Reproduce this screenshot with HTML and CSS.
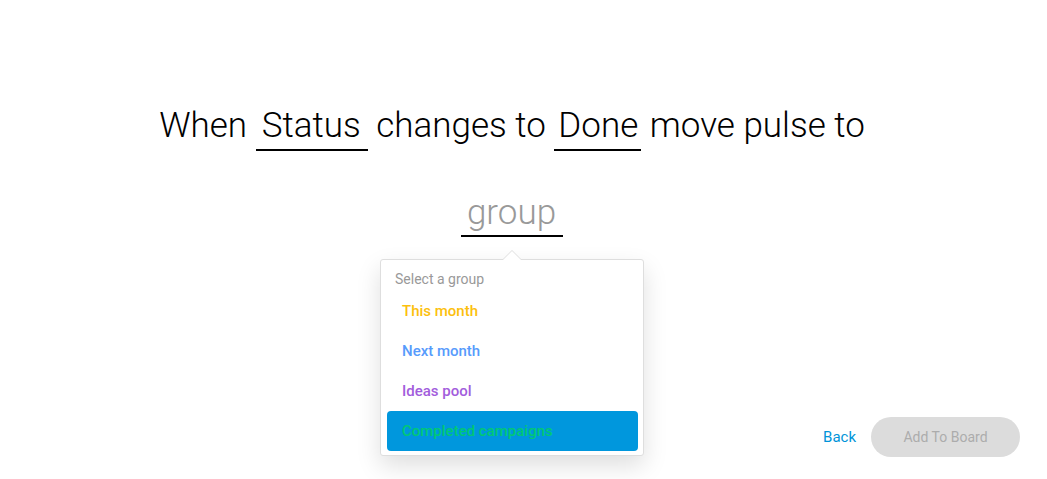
FILE: index.html
```html
<!DOCTYPE html>
<html>
<head>
<meta charset="utf-8">
<link rel="stylesheet" href="styles.css">
</head>
<body>
<div class="page">
  <div class="sentence">
    <div class="line">When <span class="word word-status">Status</span> changes to <span class="word word-done">Done</span> move pulse to</div>
    <div class="line line-group">
      <span class="word word-group">group
        <div class="dropdown">
          <div class="dd-title">Select a group</div>
          <div class="dd-item c-yellow">This month</div>
          <div class="dd-item c-blue">Next month</div>
          <div class="dd-item c-purple">Ideas pool</div>
          <div class="dd-item c-green selected">Completed campaigns</div>
        </div>
      </span>
    </div>
  </div>
  <div class="footer">
    <a class="back">Back</a>
    <button class="add">Add To Board</button>
  </div>
</div>
</body>
</html>
```
FILE: styles.css
```css
html, body {
  margin: 0;
  padding: 0;
  background: #fff;
}
body {
  font-family: Roboto, "Noto Sans", sans-serif;
}
.page {
  height: 479px;
  display: flex;
  flex-direction: column;
  box-sizing: border-box;
}
.sentence {
  padding-top: 104px;
  padding-right: 23px;
  text-align: center;
  font-size: 35px;
  font-weight: 300;
  color: #000;
}
.line {
  line-height: 43px;
  white-space: nowrap;
}
.line-group {
  margin-top: 40px;
}
.word {
  display: inline-block;
  padding: 0 6px 2px;
  border-bottom: 2px solid #000;
  line-height: 43px;
  position: relative;
}
.word-status {
  padding: 0 7px 2px 6px;
}
.word-done {
  padding: 0 3px 2px 4px;
}
.word-group {
  color: #999;
  padding: 0 7px 1px 6px;
}
.dropdown {
  position: absolute;
  top: calc(100% + 24px);
  left: 50%;
  transform: translateX(-50%);
  width: 264px;
  box-sizing: border-box;
  background: #fff;
  border: 1px solid #dedede;
  border-radius: 3px;
  padding: 9px 0 4px;
  text-align: left;
  box-shadow: 0 10px 24px rgba(0, 0, 0, 0.13);
  font-size: 15px;
  line-height: 20px;
}
.dropdown::before,
.dropdown::after {
  content: "";
  position: absolute;
  left: 50%;
  width: 0;
  height: 0;
  border-style: solid;
  transform: translateX(-50%);
}
.dropdown::before {
  top: -10px;
  border-width: 0 10px 10px;
  border-color: transparent transparent #dedede;
}
.dropdown::after {
  top: -9px;
  border-width: 0 9px 9px;
  border-color: transparent transparent #fff;
}
.dd-title {
  padding: 0 14px 2px;
  font-size: 14px;
  font-weight: 400;
  color: #999;
  line-height: 20px;
}
.dd-item {
  height: 40px;
  line-height: 40px;
  margin: 0 5px 0 6px;
  padding-left: 15px;
  border-radius: 4px;
  font-weight: 500;
}
.dd-item.selected {
  background: #0097dd;
}
.c-yellow { color: #fcc00d; }
.c-blue { color: #579bfc; }
.c-purple { color: #a25ddc; }
.c-green { color: #00c875; }
.footer {
  margin-top: auto;
  display: flex;
  justify-content: flex-end;
  align-items: center;
  gap: 15px;
  padding: 0 27px 22px 0;
}
.back {
  color: #0094d9;
  font-size: 15px;
  cursor: pointer;
}
.add {
  width: 149px;
  height: 40px;
  border: none;
  border-radius: 20px;
  background: #dcdcdc;
  color: #acacac;
  font-family: Roboto, sans-serif;
  font-size: 14px;
}
```
